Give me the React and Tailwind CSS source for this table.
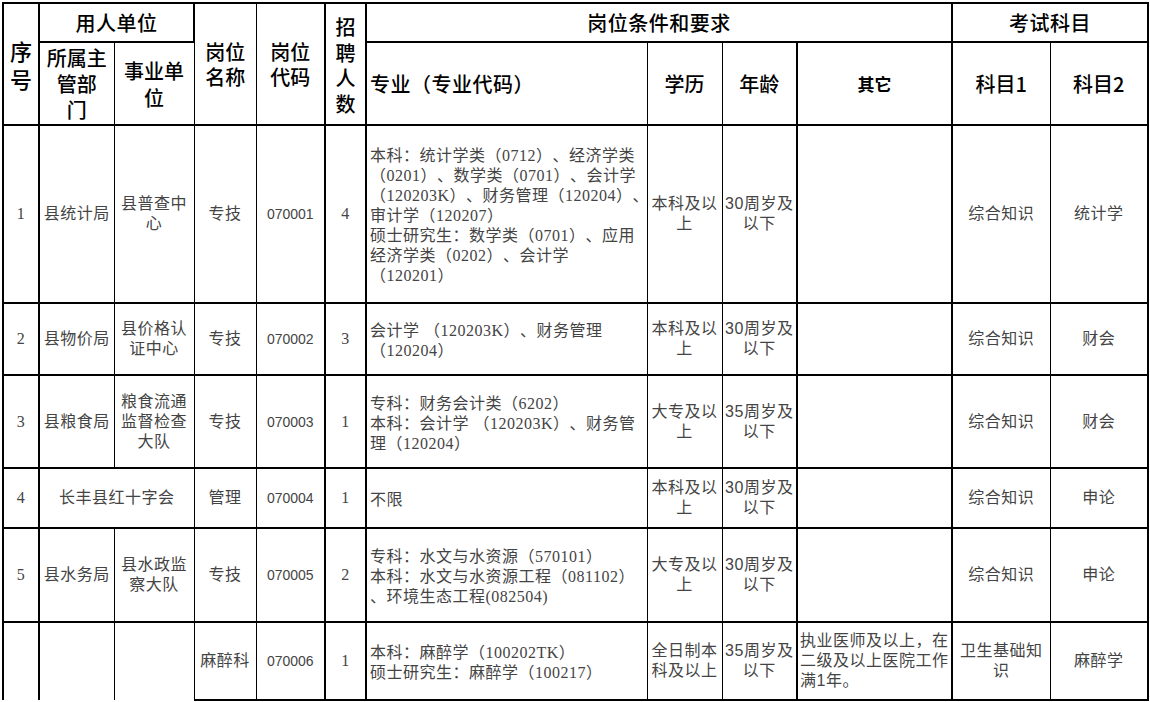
import React from "react";

// 岗位表 — recruitment positions table
const HEAD = "font-['Noto_Sans_CJK_SC',sans-serif] text-black font-medium [text-spacing-trim:space-all]";
const BODY = "font-['Liberation_Sans','Noto_Sans_CJK_SC',sans-serif] text-[#444] text-[16px] tracking-[0.5px] leading-[20px] [text-spacing-trim:space-all]";
const SERIF = "font-['Liberation_Serif','Noto_Sans_CJK_SC',serif]";

const rows = [
  {
    no: "1", dept: "县统计局", unit: ["县普查中", "心"], name: "专技", code: "070001", count: "4",
    major: [
      "本科：统计学类（0712）、经济学类",
      "（0201）、数学类（0701）、会计学",
      "（120203K）、财务管理（120204）、",
      "审计学（120207）",
      "硕士研究生：数学类（0701）、应用",
      "经济学类（0202）、会计学",
      "（120201）",
    ],
    edu: ["本科及以", "上"], age: ["30周岁及", "以下"], other: [], s1: ["综合知识"], s2: ["统计学"],
    h: "h-[178px]",
  },
  {
    no: "2", dept: "县物价局", unit: ["县价格认", "证中心"], name: "专技", code: "070002", count: "3",
    major: ["会计学 （120203K）、财务管理", "（120204）"],
    edu: ["本科及以", "上"], age: ["30周岁及", "以下"], other: [], s1: ["综合知识"], s2: ["财会"],
    h: "h-[72px]",
  },
  {
    no: "3", dept: "县粮食局", unit: ["粮食流通", "监督检查", "大队"], name: "专技", code: "070003", count: "1",
    major: ["专科：财务会计类（6202）", "本科：会计学 （120203K）、财务管", "理（120204）"],
    edu: ["大专及以", "上"], age: ["35周岁及", "以下"], other: [], s1: ["综合知识"], s2: ["财会"],
    h: "h-[93px]",
  },
  {
    no: "4", merged: "长丰县红十字会", name: "管理", code: "070004", count: "1",
    major: ["不限"],
    edu: ["本科及以", "上"], age: ["30周岁及", "以下"], other: [], s1: ["综合知识"], s2: ["申论"],
    h: "h-[60px]",
  },
  {
    no: "5", dept: "县水务局", unit: ["县水政监", "察大队"], name: "专技", code: "070005", count: "2",
    major: ["专科：水文与水资源（570101）", "本科：水文与水资源工程（081102）", "、环境生态工程(082504)"],
    edu: ["大专及以", "上"], age: ["30周岁及", "以下"], other: [], s1: ["综合知识"], s2: ["申论"],
    h: "h-[94px]",
  },
  {
    no: "", dept: "", unit: [], name: "麻醉科", code: "070006", count: "1",
    major: ["本科：麻醉学（100202TK）", "硕士研究生：麻醉学（100217）"],
    edu: ["全日制本", "科及以上"], age: ["35周岁及", "以下"],
    other: ["执业医师及以上，在", "二级及以上医院工作", "满1年。"],
    s1: ["卫生基础知", "识"], s2: ["麻醉学"],
    h: "h-[78px]", last: true,
  },
];

function Lines({ items }) {
  return items.map((t, i) => (
    <div key={i} className="whitespace-nowrap">{t}</div>
  ));
}

function App() {
  return (
    <div className="w-[1150px] h-[702px] overflow-hidden bg-white pt-[2px] pl-[2px]">
      <table className="table-fixed border-collapse w-[1145px]">
        <colgroup>
          <col className="w-[36px]" />
          <col className="w-[75px]" />
          <col className="w-[80px]" />
          <col className="w-[62px]" />
          <col className="w-[69px]" />
          <col className="w-[41px]" />
          <col className="w-[281px]" />
          <col className="w-[75px]" />
          <col className="w-[75px]" />
          <col className="w-[155px]" />
          <col className="w-[98px]" />
          <col className="w-[98px]" />
        </colgroup>
        <thead className={HEAD}>
          <tr className="h-[39px]">
            <th rowSpan={2} className="border-2 border-black text-[22px] leading-[28px] font-medium">
              <div>序</div>
              <div>号</div>
            </th>
            <th colSpan={2} className="border-2 border-black text-[20px] tracking-[0.5px] font-medium">用人单位</th>
            <th rowSpan={2} className="border-2 border-x border-black text-[20px] leading-[25px] font-medium">
              <div>岗位</div>
              <div>名称</div>
            </th>
            <th rowSpan={2} className="border-2 border-l border-black text-[20px] leading-[25px] font-medium">
              <div>岗位</div>
              <div>代码</div>
            </th>
            <th rowSpan={2} className="border-2 border-black text-[20px] leading-[25.5px] font-medium pt-[2px]">
              <div>招</div>
              <div>聘</div>
              <div>人</div>
              <div>数</div>
            </th>
            <th colSpan={4} className="border-2 border-black text-[20px] tracking-[0.5px] font-medium">岗位条件和要求</th>
            <th colSpan={2} className="border-2 border-black text-[20px] tracking-[0.5px] font-medium">考试科目</th>
          </tr>
          <tr className="h-[83px]">
            <th className="border-2 border-r border-black text-[20px] leading-[26px] font-medium">
              <div>所属主</div>
              <div>管部</div>
              <div>门</div>
            </th>
            <th className="border-2 border-l border-x border-black text-[20px] leading-[27px] font-medium">
              <div>事业单</div>
              <div>位</div>
            </th>
            <th className="border-2 border-r border-black text-[20px] tracking-[0.5px] font-medium text-left pl-[3px]">专业（专业代码）</th>
            <th className="border-2 border-x border-black text-[20px] font-medium">学历</th>
            <th className="border-2 border-l border-black text-[20px] font-medium">年龄</th>
            <th className="border-2 border-black text-[17px] font-semibold">其它</th>
            <th className="border-2 border-r border-black text-[20px] font-medium">科目1</th>
            <th className="border-2 border-l border-black text-[20px] font-medium">科目2</th>
          </tr>
        </thead>
        <tbody className={BODY}>
          {rows.map((r, i) => {
            const keep = r.last ? "border-b-0" : "";
            return (
              <tr key={i} className={r.h}>
                <td className={`border-2 border-black text-center align-middle ${SERIF} ${keep}`}>{r.no}</td>
                {r.merged ? (
                  <td colSpan={2} className="border-2 border-r border-black text-center align-middle">{r.merged}</td>
                ) : (
                  <>
                    <td className={`border-2 border-r border-black text-center align-middle ${keep}`}>{r.dept}</td>
                    <td className={`border-2 border-x border-black text-center align-middle ${keep}`}>
                      <Lines items={r.unit} />
                    </td>
                  </>
                )}
                <td className="border-2 border-x border-black text-center align-middle">{r.name}</td>
                <td className="border-2 border-l border-black text-center align-middle text-[14px] tracking-normal">{r.code}</td>
                <td className={`border-2 border-black text-center align-middle ${SERIF}`}>{r.count}</td>
                <td className={`border-2 border-r border-black text-left align-middle pl-[3px] pt-[4px] ${SERIF}`}>
                  <Lines items={r.major} />
                </td>
                <td className="border-2 border-x border-black text-center align-middle">
                  <Lines items={r.edu} />
                </td>
                <td className="border-2 border-l border-black text-center align-middle">
                  <Lines items={r.age} />
                </td>
                <td className="border-2 border-black text-left align-middle pl-[2px]">
                  <Lines items={r.other} />
                </td>
                <td className="border-2 border-r border-black text-center align-middle">
                  <Lines items={r.s1} />
                </td>
                <td className="border-2 border-l border-black text-center align-middle">
                  <Lines items={r.s2} />
                </td>
              </tr>
            );
          })}
        </tbody>
      </table>
    </div>
  );
}

export default App;
